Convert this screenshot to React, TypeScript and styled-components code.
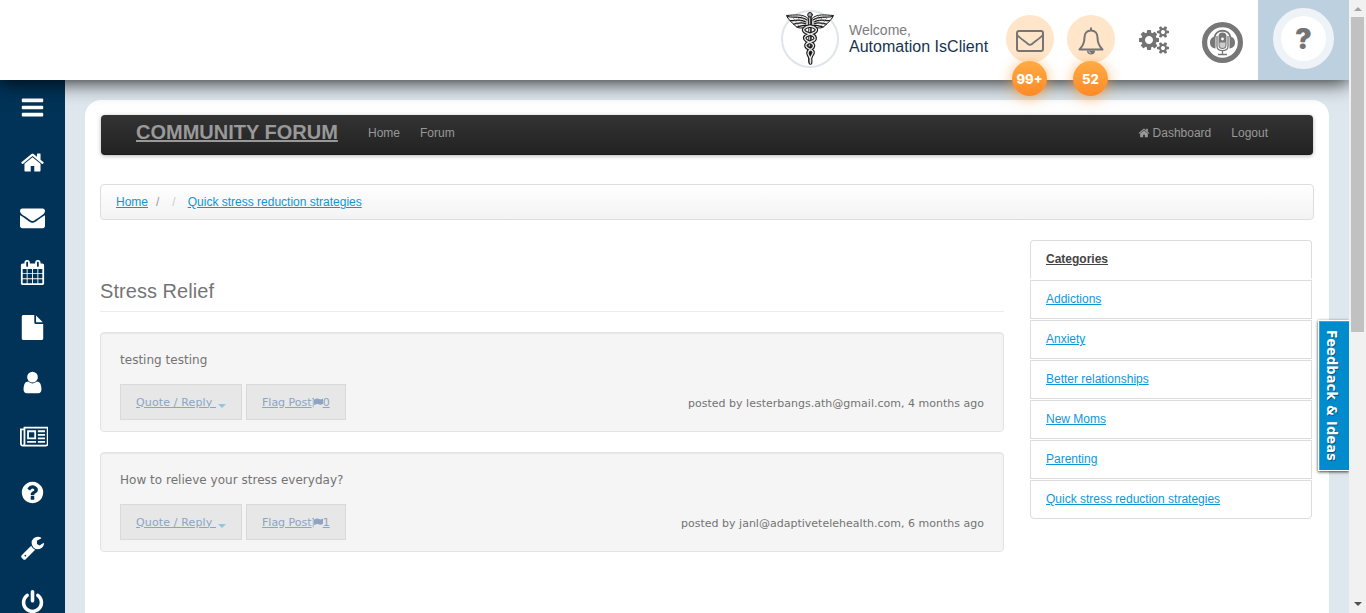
import React from 'react';
import styled, { createGlobalStyle } from 'styled-components';

const Global = createGlobalStyle`
  * { box-sizing: border-box; }
  html, body { margin: 0; padding: 0; overflow: hidden; }
  body { font-family: "Liberation Sans", Arial, sans-serif; font-size: 12px; color: #737373; background: #dde7ed; }
  svg { display: block; }
`;

const BARS = 'M1664 1344v128q0 26-19 45t-45 19h-1408q-26 0-45-19t-19-45v-128q0-26 19-45t45-19h1408q26 0 45 19t19 45zm0-512v128q0 26-19 45t-45 19h-1408q-26 0-45-19t-19-45v-128q0-26 19-45t45-19h1408q26 0 45 19t19 45zm0-512v128q0 26-19 45t-45 19h-1408q-26 0-45-19t-19-45v-128q0-26 19-45t45-19h1408q26 0 45 19t19 45z';
const HOME = 'M1472 992v480q0 26-19 45t-45 19h-384v-384h-256v384h-384q-26 0-45-19t-19-45v-480q0-1 .5-3t.5-3l575-474 575 474q1 2 1 6zm223-69l-62 74q-8 9-21 11h-3q-13 0-21-7l-692-577-692 577q-12 8-24 7-13-2-21-11l-62-74q-8-10-7-23.5t11-21.5l719-599q32-26 76-26t76 26l244 204v-195q0-14 9-23t23-9h192q14 0 23 9t9 23v408l219 182q10 8 11 21.5t-7 23.5z';
const ENVELOPE = 'M1792 710v794q0 66-47 113t-113 47h-1472q-66 0-113-47t-47-113v-794q44 49 101 87 362 246 497 345 57 42 92.5 65.5t94.5 48 110 24.5h2q51 0 110-24.5t94.5-48 92.5-65.5q170-123 498-345 57-39 100-87zm0-294q0 79-49 151t-122 123q-376 261-468 325-10 7-42.5 31t-54 38.5-52 32.5-57.5 27-50 9h-2q-23 0-50-9t-57.5-27-52-32.5-54-38.5-42.5-31q-91-64-262-182.5t-205-142.5q-62-42-117-115.5t-55-136.5q0-78 41.5-130t118.5-52h1472q65 0 112.5 47t47.5 113z';
const CALENDAR = 'M192 1664h288v-288h-288v288zm352 0h320v-288h-320v288zm-352-352h288v-320h-288v320zm352 0h320v-320h-320v320zm-352-384h288v-288h-288v288zm736 736h320v-288h-320v288zm-384-736h320v-288h-320v288zm768 736h288v-288h-288v288zm-384-352h320v-320h-320v320zm-352-864v-288q0-13-9.5-22.5t-22.5-9.5h-64q-13 0-22.5 9.5t-9.5 22.5v288q0 13 9.5 22.5t22.5 9.5h64q13 0 22.5-9.5t9.5-22.5zm736 864h288v-320h-288v320zm-384-384h320v-288h-320v288zm384 0h288v-288h-288v288zm32-480v-288q0-13-9.5-22.5t-22.5-9.5h-64q-13 0-22.5 9.5t-9.5 22.5v288q0 13 9.5 22.5t22.5 9.5h64q13 0 22.5-9.5t9.5-22.5zm384-64v1280q0 52-38 90t-90 38h-1408q-52 0-90-38t-38-90v-1280q0-52 38-90t90-38h128v-96q0-66 47-113t113-47h64q66 0 113 47t47 113v96h384v-96q0-66 47-113t113-47h64q66 0 113 47t47 113v96h128q52 0 90 38t38 90z';
const FILE = 'M1152 512v-472q22 14 36 28l408 408q14 14 28 36h-472zm-128 32q0 40 28 68t68 28h544v1056q0 40-28 68t-68 28h-1344q-40 0-68-28t-28-68v-1600q0-40 28-68t68-28h800v544z';
const USER = 'M1536 1399q0 109-62.5 187t-150.5 78h-854q-88 0-150.5-78t-62.5-187q0-85 8.5-160.5t31.5-152 58.5-131 94-89 134.5-34.5q131 128 313 128t313-128q76 0 134.5 34.5t94 89 58.5 131 31.5 152 8.5 160.5zm-256-887q0 159-112.5 271.5t-271.5 112.5-271.5-112.5-112.5-271.5 112.5-271.5 271.5-112.5 271.5 112.5 112.5 271.5z';
const NEWS = 'M1024 512h-384v384h384v-384zm128 640v128h-640v-128h640zm0-768v640h-640v-640h640zm640 768v128h-512v-128h512zm0-256v128h-512v-128h512zm0-256v128h-512v-128h512zm0-256v128h-512v-128h512zm-1536 960v-960h-128v960q0 26 19 45t45 19 45-19 19-45zm1664 0v-1088h-1536v1088q0 33-11 64h1483q26 0 45-19t19-45zm128-1216v1216q0 80-56 136t-136 56h-1664q-80 0-136-56t-56-136v-1088h256v-128h1792z';
const QUESTION = 'M1024 1376v-192q0-14-9-23t-23-9h-192q-14 0-23 9t-9 23v192q0 14 9 23t23 9h192q14 0 23-9t9-23zm256-672q0-88-55.5-163t-138.5-116-170-41q-243 0-371 213-15 24 8 42l132 100q7 6 19 6 16 0 25-12 53-68 86-92 34-24 86-24 48 0 85.5 26t37.5 59q0 38-20 61t-68 45q-63 28-115.5 86.5t-52.5 125.5v36q0 14 9 23t23 9h192q14 0 23-9t9-23q0-19 21.5-49.5t54.5-49.5q32-18 49-28.5t46-35 44.5-48 28-60.5 12.5-81zm384 192q0 209-103 385.5t-279.5 279.5-385.5 103-385.5-103-279.5-279.5-103-385.5 103-385.5 279.5-279.5 385.5-103 385.5 103 279.5 279.5 103 385.5z';
const WRENCH = 'M448 1472q0-26-19-45t-45-19-45 19-19 45 19 45 45 19 45-19 19-45zm644-420l-682 682q-37 37-90 37-52 0-91-37l-106-108q-38-36-38-90 0-53 38-91l681-681q39 98 114.5 173.5t173.5 114.5zm634-435q0 39-23 106-47 134-164.5 217.5t-258.5 83.5q-185 0-316.5-131.5t-131.5-316.5 131.5-316.5 316.5-131.5q58 0 121.5 16.5t107.5 46.5q16 11 16 28t-16 28l-293 169v224l193 107q5-3 79-48.5t135.5-81 70.5-35.5q15 0 23.5 10t8.5 25z';
const POWER = 'M1664 896q0 156-61 298t-164 245-245 164-298 61-298-61-245-164-164-245-61-298q0-182 80.5-343t226.5-270q43-32 95.5-25t83.5 50q32 42 24.5 94.5t-49.5 84.5q-98 74-151.5 181t-53.5 228q0 104 40.5 198.5t109.5 163.5 163.5 109.5 198.5 40.5 198.5-40.5 163.5-109.5 109.5-163.5 40.5-198.5q0-121-53.5-228t-151.5-181q-42-32-49.5-84.5t24.5-94.5q31-43 84-50t95 25q146 109 226.5 270t80.5 343zm-640-768v640q0 52-38 90t-90 38-90-38-38-90v-640q0-52 38-90t90-38 90 38 38 90z';
const SMALL_COG = 'v140q0 16-149 31-12 27-30 52 51 113 51 138 0 4-4 7-122 71-124 71-8 0-46-47t-52-68q-20 2-30 2t-30-2q-14 21-52 68t-46 47q-2 0-124-71-4-3-4-7 0-25 51-138-18-25-30-52-149-15-149-31v-140q0-16 149-31 13-29 30-52-51-113-51-138 0-4 4-7 4-2 35-20t59-34 30-16q8 0 46 46.5t52 67.5q20-2 30-2t30 2q51-71 92-112l6-2q4 0 124 70 4 3 4 7 0 25-51 138 17 23 30 52 149 15 149 31z';
const COGS = 'M960 896q0-106-75-181t-181-75-181 75-75 181 75 181 181 75 181-75 75-181zm768 512q0-52-38-90t-90-38-90 38-38 90q0 53 37.5 90.5t90.5 37.5 90.5-37.5 37.5-90.5zm0-1024q0-52-38-90t-90-38-90 38-38 90q0 53 37.5 90.5t90.5 37.5 90.5-37.5 37.5-90.5zm-384 421v185q0 10-7 19.5t-16 10.5l-155 24q-11 35-32 76 34 48 90 115 7 10 7 20 0 12-7 19-23 30-82.5 89.5t-78.5 59.5q-11 0-21-7l-115-90q-37 19-77 31-11 108-23 155-7 24-30 24h-186q-11 0-20-7.5t-10-17.5l-23-153q-34-10-75-31l-118 89q-7 7-20 7-11 0-21-8-144-133-144-160 0-9 7-19 10-14 41-53t47-61q-23-44-35-82l-152-24q-10-1-17-9.5t-7-19.5v-185q0-10 7-19.5t16-10.5l155-24q11-35 32-76-34-48-90-115-7-11-7-20 0-12 7-20 22-30 82-89t79-59q11 0 21 7l115 90q34-18 77-32 11-108 23-154 7-24 30-24h186q11 0 20 7.5t10 17.5l23 153q34 10 75 31l118-89q8-7 20-7 11 0 21 8 144 133 144 160 0 9-7 19-12 16-42 54t-45 60q23 48 34 82l152 23q10 2 17 10.5t7 19.5zM1984 1338' + SMALL_COG + 'M1984 314' + SMALL_COG;
const FLAG = 'M320 256q0 72-64 110v1266q0 13-9.5 22.5t-22.5 9.5h-64q-13 0-22.5-9.5t-9.5-22.5v-1266q-64-38-64-110 0-53 37.5-90.5t90.5-37.5 90.5 37.5 37.5 90.5zm1472 64v763q0 25-12.5 38.5t-39.5 27.5q-215 116-369 116-61 0-123.5-22t-108.5-48-115.5-48-142.5-22q-192 0-464 146-17 9-33 9-26 0-45-19t-19-45v-742q0-32 31-55 21-14 79-43 236-120 421-120 107 0 200 29t219 88q38 19 88 19 54 0 117.5-21t110-47 88-47 54.5-21q26 0 45 19t19 45z';

const Icon = ({ d, size, width = 1792 }: { d: string; size: number; width?: number }) => (
  <svg width={(size * width) / 1792} height={size} viewBox={`0 0 ${width} 1792`} fill="currentColor" fillRule="nonzero">
    <path d={d} />
  </svg>
);

const Window = styled.div`
  display: flex;
  width: 1366px;
  height: 613px;
  overflow: hidden;
`;
const Page = styled.div`
  position: relative;
  width: 1349px;
  height: 613px;
  display: flex;
  flex-direction: column;
  overflow: hidden;
`;
const Header = styled.header`
  position: relative;
  z-index: 2;
  height: 80px;
  flex: none;
  display: flex;
  justify-content: flex-end;
  align-items: flex-start;
  background: #fff;
  box-shadow: 0 0 20px 1px rgba(0, 0, 0, 0.95);
  clip-path: inset(0 0 -40px 0);
`;
const Avatar = styled.div`
  width: 58px;
  height: 58px;
  margin: 10px 10px 0 0;
  border: 2px solid #dfe5eb;
  border-radius: 50%;
`;
const Greeting = styled.div`
  width: 157px;
  padding-top: 22px;
  font-size: 14px;
  line-height: 16px;
  color: #7c7c7c;
  white-space: nowrap;
`;
const UserName = styled.div`
  font-size: 16px;
  line-height: 17px;
  letter-spacing: 0.02px;
  color: #17344f;
`;
const Bubble = styled.div`
  position: relative;
  width: 48px;
  height: 48px;
  margin: 15px 13px 0 0;
  border-radius: 50%;
  display: flex;
  align-items: center;
  justify-content: center;
  padding-top: 3px;
  background: #ffe6ca;
`;
const Badge = styled.span`
  position: absolute;
  left: 6px;
  top: 46px;
  width: 35px;
  height: 35px;
  border-radius: 50%;
  background: linear-gradient(#ffab45, #ff8a26);
  box-shadow: 0 2px 14px rgba(255, 150, 40, 0.65);
  color: #fff;
  font: 800 13px/36px Inter, sans-serif;
  text-align: center;
`;
const CogSlot = styled.div`
  margin: 26px 32px 0 10px;
  color: #737373;
`;
const MicSlot = styled.div`
  margin: 22px 15px 0 0;
`;
const HelpBlock = styled.div`
  width: 91px;
  height: 80px;
  padding: 8px 0 0 15px;
  background: #bdd0e0;
`;
const HelpButton = styled.div`
  width: 61px;
  height: 61px;
  border: 8px solid #eef3f7;
  border-radius: 50%;
  background: #fff;
  text-align: center;
  color: #737373;
  font: 900 28px/47px Inter, sans-serif;
`;

const Body = styled.div`
  flex: 1;
  display: flex;
  min-height: 0;
`;
const Sidebar = styled.nav`
  width: 65px;
  flex: none;
  background: #003357;
  color: #fff;
  overflow: hidden;
`;
const SideItem = styled.div<{ $shift: boolean }>`
  height: 55px;
  display: flex;
  justify-content: center;
  align-items: center;
  padding-left: ${(p) => (p.$shift ? 3 : 0)}px;
`;
const Content = styled.main`
  width: 1244px;
  margin: 20px 0 0 20px;
  padding: 15px 15px 0;
  background: #fff;
  border-radius: 16px 16px 0 0;
`;
const Navbar = styled.div`
  display: flex;
  height: 40px;
  margin: 0 1px;
  padding: 0 45px 0 35px;
  border-radius: 4px;
  background: linear-gradient(#333, #222);
  box-shadow: 0 1px 4px rgba(0, 0, 0, 0.3), inset 0 -1px 0 rgba(0, 0, 0, 0.25);
  color: #999;
  line-height: 36px;
`;
const Brand = styled.a`
  width: 232px;
  font-size: 20px;
  font-weight: 700;
  line-height: 35px;
  text-decoration: underline;
`;
const NavLink = styled.a<{ $end?: boolean }>`
  display: flex;
  align-items: center;
  gap: 3px;
  height: 36px;
  margin-right: ${(p) => (p.$end ? 0 : 20)}px;
`;
const NavSpacer = styled.div`
  flex: 1;
`;
const Breadcrumb = styled.div`
  display: flex;
  height: 36px;
  margin-top: 29px;
  padding: 0 15px;
  border: 1px solid #ddd;
  border-radius: 4px;
  background: linear-gradient(#fff, #f3f3f3);
  line-height: 34px;
`;
const Slash = styled.span<{ $color: string; $gap: number }>`
  margin-left: ${(p) => p.$gap}px;
  color: ${(p) => p.$color};
`;
const Link = styled.a<{ $gap?: number }>`
  margin-left: ${(p) => p.$gap ?? 0}px;
  color: #0c97da;
  text-decoration: underline;
`;
const Columns = styled.div`
  display: flex;
  justify-content: space-between;
  margin: 20px 2px 0 0;
`;
const Thread = styled.section`
  width: 904px;
`;
const Title = styled.h1`
  height: 72px;
  margin: 0 0 20px;
  padding-top: 36px;
  border-bottom: 1px solid #eee;
  font-size: 20px;
  letter-spacing: 0.05px;
  font-weight: 400;
  line-height: 30px;
  color: #757575;
`;
const Post = styled.article`
  height: 100px;
  margin-bottom: 20px;
  padding: 17px 19px 0;
  border: 1px solid #e3e3e3;
  border-radius: 4px;
  background: #f5f5f5;
  box-shadow: inset 0 1px 1px rgba(0, 0, 0, 0.05);
  font-family: "DejaVu Sans", Verdana, sans-serif;
`;
const PostText = styled.p`
  margin: 0 0 14px;
  font-size: 12px;
  line-height: 20px;
  letter-spacing: 0.02px;
`;
const PostFooter = styled.div`
  display: flex;
  align-items: center;
  gap: 4px;
  height: 36px;
  font-size: 11px;
`;
const PostButton = styled.a<{ $width: number }>`
  display: flex;
  align-items: center;
  width: ${(p) => p.$width}px;
  height: 36px;
  padding-left: 15px;
  border: 1px solid #d9d9d9;
  background: #e7e7e7;
  color: #8ba5c2;
  text-decoration: underline;
  white-space: pre;
`;
const ReplyLabel = styled.span`
  letter-spacing: 0.14px;
`;
const Caret = styled.i`
  margin: 7px 0 0 2px;
  border: 4px solid transparent;
  border-top-color: #95c4e0;
  border-bottom: 0;
`;
const Meta = styled.span`
  margin-left: auto;
  padding-top: 2px;
  letter-spacing: 0.01px;
`;
const Categories = styled.aside`
  display: flex;
  flex-direction: column;
  gap: 1px;
  width: 282px;
`;
const Category = styled.div`
  height: 39px;
  padding-left: 15px;
  border: 1px solid #ddd;
  line-height: 36px;
  &:first-child { border-bottom-color: transparent; border-radius: 4px 4px 0 0; }
  &:last-child { border-radius: 0 0 4px 4px; }
`;
const CategoryHeading = styled.strong`
  color: #444;
  text-decoration: underline;
`;
const FeedbackTab = styled.div`
  position: absolute;
  right: 0;
  top: 320px;
  z-index: 3;
  width: 31px;
  height: 151px;
  padding-right: 2px;
  border: 1px solid #fff;
  border-right: 0;
  background: #008ccc;
  box-shadow: 0 1px 3px rgba(0, 0, 0, 0.75), inset 1px 1px 0 #3aa6d8;
  color: #fff;
  writing-mode: vertical-rl;
  line-height: 30px;
  text-align: center;
  font-family: "DejaVu Sans Condensed", "DejaVu Sans", sans-serif;
  font-weight: 700;
  font-size: 14px;
  letter-spacing: 0.35px;
  text-shadow: 1px -1px 0 rgba(0, 0, 0, 0.4);
`;
const Scrollbar = styled.div`
  width: 17px;
  height: 613px;
  display: flex;
  flex-direction: column;
  align-items: center;
  background: #f1f1f1;
`;
const Arrow = styled.div<{ $down?: boolean }>`
  height: 17px;
  padding-top: ${(p) => (p.$down ? 6 : 7)}px;
  margin-top: ${(p) => (p.$down ? 'auto' : '0')};
`;
const Thumb = styled.div`
  width: 13px;
  height: 315px;
  background: #c1c1c1;
`;

const SNAKES = 'M27 14C21 15 19 18 22 20C26 23 33 22 32 27C31 31 22 29 23 34C24 38 31 37 30 41C29 44 26 45 27.500 51M27 14C33 15 35 18 32 20C28 23 20 23 22 27C24 31 31 30 30.500 34C30 38 25 37 25 41C25 44 29 46 27.500 51';

const Caduceus = () => (
  <svg width="54" height="54" viewBox="0 0 54 54" fill="none" stroke="#161616" strokeLinecap="round" strokeLinejoin="round">
    <path d="M25 6.500C20 1.500 12 3 3.500 3.500C5 7 8 10 12 13.500C15 17 20 16.500 25 14ZM29 6.500C34 1.500 42 3 50.500 3.500C49 7 46 10 42 13.500C39 17 34 16.500 29 14Z" fill="#f4f4f4" strokeWidth="1" />
    <path d="M24 8C18 4 11 6 4.500 4.500M23 10C17 6.500 12 9 7.500 8.500M23 12C18 9 14 12 10.500 12M23 13.500C19 12.500 17 15 14 15M30 8C36 4 43 6 49.500 4.500M31 10C37 6.500 42 9 46.500 8.500M31 12C36 9 40 12 43.500 12M31 13.500C35 12.500 37 15 40 15" strokeWidth="1.200" />
    <path d="M8 4l5 5M13 3.500l5 6M18 4l4 5M12 9l4 5M46 4l-5 5M41 3.500l-5 6M36 4l-4 5M42 9l-4 5" stroke="#777" strokeWidth=".7" />
    <path d="M27 4V50" strokeWidth="3.400" />
    <path d="M26.600 5V34" stroke="#bbb" strokeWidth="1.300" />
    <circle cx="27" cy="2.800" r="2.300" fill="#aaa" strokeWidth="1" />
    <path d={SNAKES} strokeWidth="3.600" />
    <path d={SNAKES} stroke="#e4e4e4" strokeWidth="1.400" />
  </svg>
);

const MailOutline = () => (
  <svg width="28" height="22" viewBox="0 0 28 22" fill="none" stroke="#757575" strokeWidth="2">
    <rect x="1" y="1" width="26" height="20" rx="2" />
    <path d="M1 4.500C2 7 10 12 12 14Q14 15.500 16 14C18 12 26 7 27 4.500" />
  </svg>
);

const BellOutline = () => (
  <svg width="28" height="28" viewBox="0 0 28 28" fill="none" stroke="#757575" strokeWidth="2">
    <path d="M14 0.500V3M2.500 22.500C6 19 7.500 15.500 7.500 10.500C7.500 6.500 10 3.500 14 3.500S20.500 6.500 20.500 10.500C20.500 15.500 22 19 25.500 22.500Z" strokeLinejoin="round" />
    <path d="M10 23.500h8a4 4 0 0 1-8 0Z" fill="#757575" stroke="none" />
    <path d="M11.800 24a2.300 2.300 0 0 0 2.200 2.200" stroke="#ffe6ca" strokeWidth=".7" />
  </svg>
);

const MicBadge = () => (
  <svg width="41" height="41" viewBox="0 0 41 41" fill="none" stroke="#777">
    <circle cx="20.500" cy="20.500" r="17.900" strokeWidth="5.200" />
    <path d="M12.500 15.500C13.500 6.500 27.500 6.500 28.500 15.500" strokeWidth="2" />
    <path d="M13.500 14.500v12C9.500 26 8 23.500 8 20.500S9.500 15 13.500 14.500ZM27.500 14.500v12C31.500 26 33 23.500 33 20.500S31.500 15 27.500 14.500Z" fill="#777" stroke="none" />
    <rect x="16.500" y="10.500" width="8" height="16.500" rx="4" fill="#777" stroke="none" />
    <path d="M17.500 20.500h6v2.500a3 3 0 0 1-6 0Z" fill="#ccc" stroke="none" />
    <circle cx="20.500" cy="17" r="1.400" fill="#fff" stroke="none" />
    <path d="M15 14V24.500C15 30 26 30 26 24.500V14M20.500 28.500v4M16 32.500h9" strokeWidth="1.300" />
  </svg>
);

const sideIcons: { d: string; width?: number }[] = [
  { d: BARS }, { d: HOME }, { d: ENVELOPE }, { d: CALENDAR }, { d: FILE },
  { d: USER }, { d: NEWS, width: 2048 }, { d: QUESTION }, { d: WRENCH }, { d: POWER },
];
const categories = ['Addictions', 'Anxiety', 'Better relationships', 'New Moms', 'Parenting', 'Quick stress reduction strategies'];
const posts = [
  { text: 'testing testing', flags: 0, meta: 'posted by lesterbangs.ath@gmail.com, 4 months ago' },
  { text: 'How to relieve your stress everyday?', flags: 1, meta: 'posted by janl@adaptivetelehealth.com, 6 months ago' },
];

export default function App() {
  return (
    <>
      <Global />
      <Window>
        <Page>
          <Header>
            <Avatar><Caduceus /></Avatar>
            <Greeting>
              Welcome,
              <UserName>Automation IsClient</UserName>
            </Greeting>
            <Bubble><MailOutline /><Badge>99+</Badge></Bubble>
            <Bubble><BellOutline /><Badge>52</Badge></Bubble>
            <CogSlot><Icon d={COGS} size={28} width={2048} /></CogSlot>
            <MicSlot><MicBadge /></MicSlot>
            <HelpBlock><HelpButton>?</HelpButton></HelpBlock>
          </Header>
          <Body>
            <Sidebar>
              {sideIcons.map((icon, i) => (
                <SideItem key={i} $shift={icon.width !== undefined}><Icon d={icon.d} width={icon.width} size={25} /></SideItem>
              ))}
            </Sidebar>
            <Content>
              <Navbar>
                <Brand>COMMUNITY FORUM</Brand>
                <NavLink>Home</NavLink>
                <NavLink>Forum</NavLink>
                <NavSpacer />
                <NavLink><Icon d={HOME} size={12} />Dashboard</NavLink>
                <NavLink $end>Logout</NavLink>
              </Navbar>
              <Breadcrumb>
                <Link>Home</Link>
                <Slash $color="#999" $gap={8}>/</Slash>
                <Slash $color="#ccc" $gap={13}>/</Slash>
                <Link $gap={12}>Quick stress reduction strategies</Link>
              </Breadcrumb>
              <Columns>
                <Thread>
                  <Title>Stress Relief</Title>
                  {posts.map((post) => (
                    <Post key={post.text}>
                      <PostText>{post.text}</PostText>
                      <PostFooter>
                        <PostButton $width={122}><ReplyLabel>{'Quote / Reply '}</ReplyLabel><Caret /></PostButton>
                        <PostButton $width={100}>Flag Post<Icon d={FLAG} size={11} />{post.flags}</PostButton>
                        <Meta>{post.meta}</Meta>
                      </PostFooter>
                    </Post>
                  ))}
                </Thread>
                <Categories>
                  <Category><CategoryHeading>Categories</CategoryHeading></Category>
                  {categories.map((name) => (
                    <Category key={name}><Link>{name}</Link></Category>
                  ))}
                </Categories>
              </Columns>
            </Content>
          </Body>
          <FeedbackTab>Feedback &amp; Ideas</FeedbackTab>
        </Page>
        <Scrollbar>
          <Arrow>
            <svg width="8" height="4" viewBox="0 0 8 4"><path d="M0 4L4 0L8 4Z" fill="#a3a3a3" /></svg>
          </Arrow>
          <Thumb />
          <Arrow $down>
            <svg width="8" height="4" viewBox="0 0 8 4"><path d="M0 0L4 4L8 0Z" fill="#505050" /></svg>
          </Arrow>
        </Scrollbar>
      </Window>
    </>
  );
}
